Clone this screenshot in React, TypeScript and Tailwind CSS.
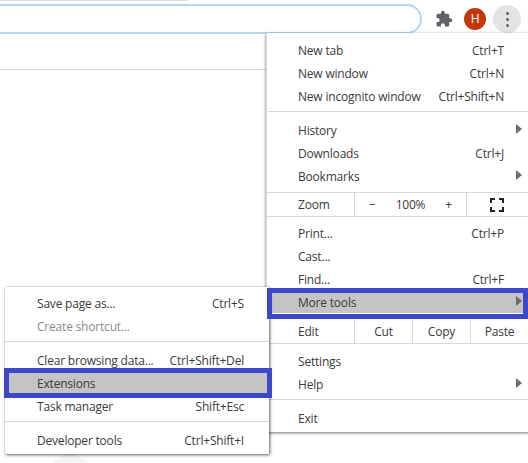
const font = "font-['Open_Sans','Noto_Sans',sans-serif]";

function Arrow() {
  return (
    <svg width="6" height="10" viewBox="0 0 6 10" className="absolute right-[7px] top-[5px]">
      <path d="M0 0 L6 5 L0 10 Z" fill="#6b6b6b" />
    </svg>
  );
}

function Row({ label, shortcut, arrow, dim, selected, sub, line }: { label: string; shortcut?: string; arrow?: boolean; dim?: boolean; selected?: boolean; sub?: boolean; line?: boolean }) {
  return (
    <div className={`relative flex h-[23px] items-center justify-between pr-[25px] ${sub ? "pl-[32px]" : "pl-[31px]"} ${selected ? "bg-[#c4c4c4]" : ""} ${line ? "shadow-[inset_0_-1px_0_#ffffff]" : ""} ${dim ? "text-[#8a8a8a]" : "text-[#3a3a3a]"}`}>
      <span>{label}</span>
      {shortcut && <span>{shortcut}</span>}
      {arrow && <Arrow />}
    </div>
  );
}

function Sep({ my = "my-[3px]" }: { my?: string }) {
  return <div className={`h-[1px] bg-[#d9d9d9] ${my}`} />;
}

function Cell({ children }: { children: React.ReactNode }) {
  return <div className="flex h-full w-[58px] items-center justify-center border-l border-[#d9d9d9]">{children}</div>;
}

export default function App() {
  return (
    <div className={`relative h-[463px] w-[528px] overflow-hidden bg-white text-[12px] leading-none tracking-[-0.2px] ${font}`}>
      {/* Browser chrome */}
      <div className="h-[1px] w-[187px] bg-[#dcdcdc]" />
      <div className="flex h-[68px] items-start">
        <div className="mt-[3px] h-[30px] w-[422px] rounded-r-[15px] border-y-2 border-r-2 border-[#b5d5f5]" />
        <div className="mt-[4px] flex items-center">
          <svg width="18" height="18" viewBox="0 0 24 24" fill="#5f6368" className="ml-[13px] mr-[11px]">
            <path d="M20.5 11H19V7a2 2 0 0 0-2-2h-4V3.5a2.5 2.5 0 0 0-5 0V5H4a2 2 0 0 0-2 2v3.8h1.5a2.7 2.7 0 0 1 0 5.4H2V20a2 2 0 0 0 2 2h3.8v-1.5a2.7 2.7 0 0 1 5.4 0V22H17a2 2 0 0 0 2-2v-4h1.5a2.5 2.5 0 0 0 0-5z" />
          </svg>
          <div className="flex h-[22px] w-[22px] items-center justify-center rounded-full bg-[#c5360b] text-[12px] text-white">H</div>
          <div className="ml-[7px] flex h-[28px] w-[28px] flex-col items-center justify-center gap-[3px] rounded-full bg-[#e3e3e3]">
            <span className="h-[3px] w-[3px] rounded-full bg-[#5f6368]" />
            <span className="h-[3px] w-[3px] rounded-full bg-[#5f6368]" />
            <span className="h-[3px] w-[3px] rounded-full bg-[#5f6368]" />
          </div>
        </div>
      </div>
      <div className="h-[1px] w-[266px] bg-[#d9d9d9]" />

      {/* Faint page graphic behind the menus */}
      <svg width="40" height="12" viewBox="0 0 40 12" className="absolute left-[52px] top-[451px]">
        <path d="M18 0 L1 12 L37 12 Z" fill="#f4f4f4" />
      </svg>

      {/* Main menu */}
      <div className="absolute left-[266px] top-[33px] h-[399px] w-[263px] border-l border-[#d6d6d6] bg-white pt-[6px] shadow-[0_1px_3px_rgba(0,0,0,0.55)]">
        <Row label="New tab" shortcut="Ctrl+T" />
        <Row label="New window" shortcut="Ctrl+N" />
        <Row label="New incognito window" shortcut="Ctrl+Shift+N" />
        <Sep my="mt-[3px] mb-[7px] ml-[1px]" />
        <Row label="History" arrow />
        <Row label="Downloads" shortcut="Ctrl+J" />
        <Row label="Bookmarks" arrow />
        <Sep my="mt-[4px]" />
        <div className="flex h-[23px] text-[#3a3a3a]">
          <div className="flex w-[87px] items-center pl-[31px]">Zoom</div>
          <div className="flex w-[113px] items-center justify-between border-x border-[#d9d9d9] px-[14px]">
            <span>−</span><span>100%</span><span>+</span>
          </div>
          <div className="flex flex-1 items-center pl-[23px]">
            <svg width="14" height="14" viewBox="0 0 14 14" fill="none" stroke="#222" strokeWidth="2">
              <path d="M1 5V1h4M9 1h4v4M13 9v4H9M5 13H1V9" />
            </svg>
          </div>
        </div>
        <Sep my="mb-[5px]" />
        <Row label="Print..." shortcut="Ctrl+P" />
        <Row label="Cast..." />
        <Row label="Find..." shortcut="Ctrl+F" />
        <Row label="More tools" arrow selected line />
        <div className="mt-[6px] flex h-[23px] text-[#3a3a3a]">
          <div className="flex w-[87px] items-center pl-[31px]">Edit</div>
          <Cell>Cut</Cell>
          <Cell>Copy</Cell>
          <Cell>Paste</Cell>
        </div>
        <Sep my="mb-[6px]" />
        <Row label="Settings" />
        <Row label="Help" arrow />
        <Sep my="mt-[3px] mb-[7px]" />
        <Row label="Exit" />
      </div>

      {/* More tools submenu */}
      <div className="absolute left-[5px] top-[287px] w-[264px] bg-white pb-[2px] pt-[5px] shadow-[1px_1px_3px_rgba(0,0,0,0.6),0_0_1px_rgba(0,0,0,0.3)]">
        <Row sub label="Save page as..." shortcut="Ctrl+S" />
        <Row sub label="Create shortcut..." dim />
        <Sep my="mt-[3px] mb-[7px]" />
        <Row sub label="Clear browsing data..." shortcut="Ctrl+Shift+Del" />
        <Row sub label="Extensions" selected />
        <Row sub label="Task manager" shortcut="Shift+Esc" />
        <Sep my="mt-[3px] mb-[7px]" />
        <Row sub label="Developer tools" shortcut="Ctrl+Shift+I" />
      </div>

      {/* Highlight boxes */}
      <div className="absolute left-[267px] top-[288px] h-[31px] w-[261px] border-[5px] border-[#3f47c9]" />
      <div className="absolute left-[4px] top-[368px] h-[30px] w-[268px] border-[5px] border-[#3f47c9]" />
    </div>
  );
}
